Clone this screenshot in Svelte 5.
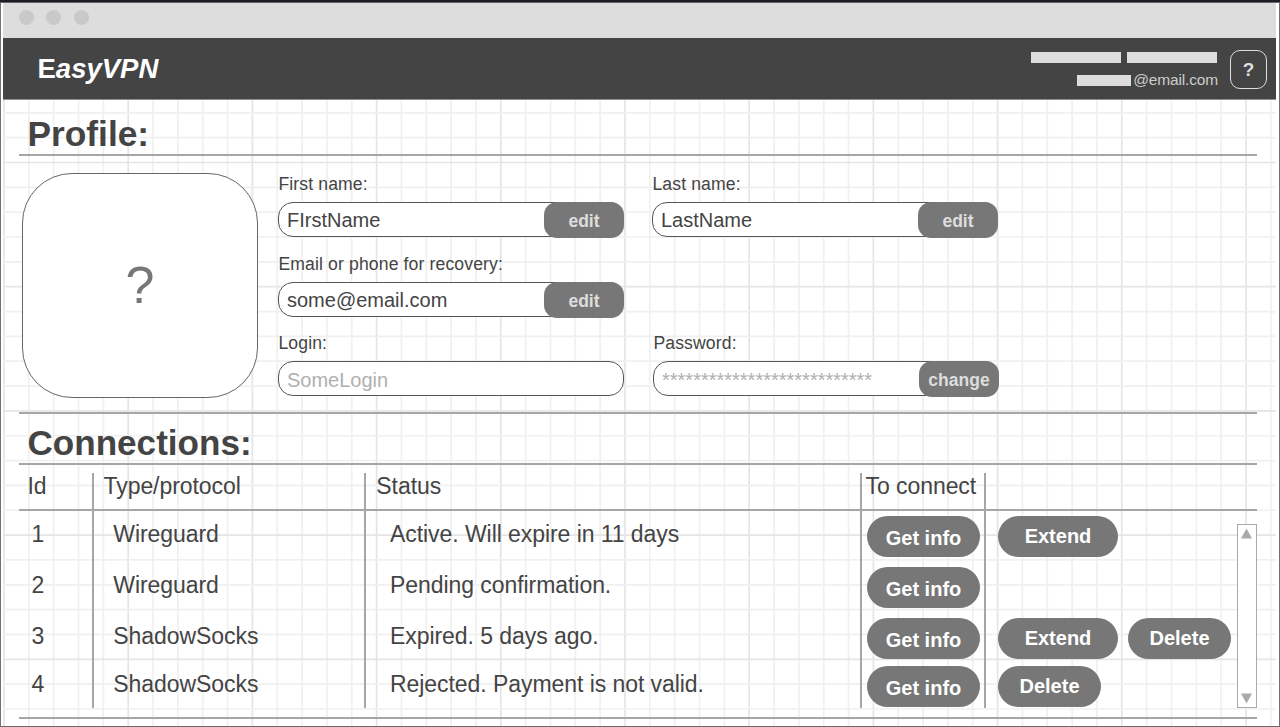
<script>
  const pitch = 24.84;
  const vlines = Array.from({ length: 52 }, (_, i) => ({ p: 4.0 + i * pitch, major: i % 5 === 0 }));
  const hlines = Array.from({ length: 29 }, (_, i) => ({ p: 38.3 + i * pitch, major: i % 5 === 0 }));

  const rows = [
    { id: 1, type: 'Wireguard', status: 'Active. Will expire in 11 days', actions: ['Extend'] },
    { id: 2, type: 'Wireguard', status: 'Pending confirmation.', actions: [] },
    { id: 3, type: 'ShadowSocks', status: 'Expired. 5 days ago.', actions: ['Extend', 'Delete'] },
    { id: 4, type: 'ShadowSocks', status: 'Rejected. Payment is not valid.', actions: ['Delete'] }
  ];
</script>

<div class="window">
  <svg class="grid" width="1280" height="727" aria-hidden="true">
    {#each vlines as l}
      <line x1={l.p} x2={l.p} y1="99" y2="726" class:major={l.major} />
    {/each}
    {#each hlines as l}
      <line y1={l.p} y2={l.p} x1="3" x2="1276" class:major={l.major} />
    {/each}
  </svg>

  <div class="titlebar"><i></i><i></i><i></i></div>

  <header>
    <div class="brand">E<em>asyVPN</em></div>
    <div class="account">
      <div class="line"><b class="name"></b><b class="name"></b></div>
      <div class="line mail"><b class="user"></b><span>@email.com</span></div>
    </div>
    <button class="help">?</button>
  </header>

  <main>
    <h1>Profile:</h1>
    <section class="profile">
      <div class="avatar">?</div>
      <div class="fields">
        <div class="field">
          <label for="fn">First name:</label>
          <div class="box" id="fn"><span>FIrstName</span><button>edit</button></div>
        </div>
        <div class="field">
          <label for="ln">Last name:</label>
          <div class="box" id="ln"><span>LastName</span><button>edit</button></div>
        </div>
        <div class="field wide">
          <label for="em">Email or phone for recovery:</label>
          <div class="box" id="em"><span>some@email.com</span><button>edit</button></div>
        </div>
        <div class="field">
          <label for="lg">Login:</label>
          <div class="box muted" id="lg"><span>SomeLogin</span></div>
        </div>
        <div class="field shift">
          <label for="pw">Password:</label>
          <div class="box muted" id="pw"><span class="stars">***************************</span><button>change</button></div>
        </div>
      </div>
    </section>

    <h1 class="second">Connections:</h1>
    <section class="table">
      <div class="row head">
        <div class="c1">Id</div>
        <div class="c2">Type/protocol</div>
        <div class="c3">Status</div>
        <div class="c4">To connect</div>
        <div class="c5"></div>
      </div>
      <div class="body">
        {#each rows as r}
          <div class="row r{r.id}">
            <div class="c1">{r.id}</div>
            <div class="c2">{r.type}</div>
            <div class="c3">{r.status}</div>
            <div class="c4"><button class="pill info">Get info</button></div>
            <div class="c5">
              {#each r.actions as a}
                <button class="pill {a.toLowerCase()}">{a}</button>
              {/each}
            </div>
          </div>
        {/each}
        <div class="scroll">
          <svg width="12" height="11" viewBox="0 0 12 11"><path d="M5.5 .5 11 10.5H0Z" /></svg>
          <svg width="12" height="11" viewBox="0 0 12 11"><path d="M0 .5H11L5.5 10.5Z" /></svg>
        </div>
      </div>
    </section>
  </main>
</div>

<style>
  :global(body) {
    margin: 0;
    background: #fff;
  }
  .window {
    position: relative;
    box-sizing: border-box;
    width: 1280px;
    height: 727px;
    overflow: hidden;
    padding: 3px 4px 0 3px;
    background: #fff;
    box-shadow: inset 0 2px #1c1e28, inset 0 3px #64656a, inset 1px 0 #717171, inset -1px 0 #717171, inset 0 -1px #666;
    font-family: "Liberation Sans", Arial, sans-serif;
    color: #444;
  }
  .grid {
    position: absolute;
    left: 0;
    top: 0;
  }
  .grid line {
    stroke: #f0f0f0;
    stroke-width: 1.7;
  }
  .grid line.major {
    stroke: #e5e5e5;
  }
  button {
    font: inherit;
    border: 0;
    padding: 0;
    margin: 0;
    color: inherit;
    background: none;
  }
  .titlebar {
    position: relative;
    display: flex;
    gap: 12.5px;
    height: 35px;
    padding: 7px 0 0 15.7px;
    box-sizing: border-box;
    background: #ddd;
  }
  .titlebar i {
    width: 15px;
    height: 15px;
    border-radius: 50%;
    background: #c9c9c9;
  }
  header {
    position: relative;
    display: flex;
    align-items: center;
    height: 61px;
    border-bottom: 1px solid #8f8f8f;
    background: #444;
    color: #fff;
  }
  .brand {
    flex: 1;
    padding: 1px 0 0 34.5px;
    font-size: 27.5px;
    font-weight: 700;
    line-height: 30px;
  }
  .account {
    display: flex;
    flex-direction: column;
    align-items: flex-end;
    margin-right: 12px;
    padding-top: 5px;
  }
  .line {
    display: flex;
    gap: 6px;
    margin-right: 1px;
  }
  .line b {
    height: 11px;
    background: #ddd;
  }
  .name {
    width: 90px;
  }
  .line.mail {
    gap: 2px;
    align-items: center;
    height: 20px;
    margin: 7px 0 0;
    font-size: 15.5px;
    color: #ccc;
    letter-spacing: -0.15px;
  }
  .user {
    width: 54px;
  }
  .help {
    box-sizing: border-box;
    width: 37px;
    height: 39px;
    margin: 1px 9px 0 0;
    padding-top: 1px;
    border: 1px solid #ddd;
    border-radius: 10px;
    font-size: 19px;
    font-weight: 700;
    color: #ddd;
  }
  main {
    position: relative;
    margin: 0 19px 0 16px;
  }
  h1 {
    box-sizing: border-box;
    height: 55px;
    margin: 0;
    padding: 14px 0 0 8.5px;
    border-bottom: 2px solid #a6a6a6;
    font-size: 35.1px;
    line-height: 40px;
  }
  h1:first-child {
    height: 56px;
    margin-top: -0.4px;
    font-size: 35.3px;
  }
  h1.second {
    height: 51px;
    padding-top: 9px;
  }
  .profile {
    display: flex;
    box-sizing: border-box;
    height: 258px;
    padding: 17.6px 0 0 3px;
    border-bottom: 2px solid #a6a6a6;
  }
  .avatar {
    display: grid;
    place-items: center;
    box-sizing: border-box;
    width: 236px;
    height: 225px;
    padding-bottom: 2px;
    border: 1px solid #666;
    border-radius: 50px;
    background: #fff;
    font-size: 52px;
    color: #777;
  }
  .fields {
    display: grid;
    grid-template-columns: 346px 346px;
    grid-template-rows: 80px 79px 79px;
    column-gap: 28px;
    margin-left: 20px;
  }
  .wide {
    grid-column: 1 / -1;
    width: 346px;
  }
  .shift {
    margin: 0 -1px 0 1px;
  }
  label {
    display: block;
    height: 28.5px;
    padding-left: 0.4px;
    font-size: 17.6px;
    line-height: 23px;
    letter-spacing: 0.13px;
  }
  .box {
    display: flex;
    box-sizing: border-box;
    height: 35px;
    border: 1px solid #555;
    border-radius: 15px;
    background: #fff;
    font-size: 20px;
    line-height: 35px;
  }
  .box span {
    flex: 1;
    padding-left: 8px;
  }
  .box.muted span {
    color: #b0b0b0;
    line-height: 37px;
  }
  .box button {
    width: 80px;
    height: 36px;
    margin: -1px -1px 0 0;
    border-radius: 13px;
    background: #777;
    color: #ddd;
    font-size: 17.5px;
    font-weight: 700;
    line-height: 38px;
  }
  .row {
    display: grid;
    grid-template-columns: 73px 272px 496px 124px 1fr;
    font-size: 23px;
    line-height: 26px;
    letter-spacing: -0.06px;
  }
  .row > div {
    box-sizing: border-box;
  }
  .row > div + div {
    border-left: 2px solid #a6a6a6;
  }
  .head {
    height: 46px;
    border-bottom: 2px solid #a6a6a6;
    padding-top: 8px;
    box-sizing: border-box;
  }
  .head .c1 {
    padding-left: 8.5px;
  }
  .head .c2 {
    padding-left: 9.5px;
  }
  .head .c3 {
    padding-left: 10.3px;
  }
  .head .c4 {
    padding-left: 3.5px;
  }
  .body {
    position: relative;
    height: 206px;
    border-bottom: 2px solid #a6a6a6;
  }
  .r1,
  .r2 {
    height: 51px;
  }
  .r3 {
    height: 48px;
  }
  .r4 {
    height: 47px;
  }
  .body .c1,
  .body .c2,
  .body .c3 {
    padding-top: 10px;
  }
  .body .c1 {
    padding-left: 12.4px;
  }
  .body .c2 {
    padding-left: 19.3px;
  }
  .body .c3 {
    padding-left: 24px;
  }
  .body .c4 {
    padding: 5px 0 0 5px;
  }
  .body .c5 {
    display: flex;
    gap: 10px;
    padding: 5px 0 0 12px;
  }
  .pill {
    height: 41px;
    border-radius: 20.5px;
    background: #777;
    color: #fff;
    font-size: 20px;
    font-weight: 700;
    line-height: 39px;
    letter-spacing: 0;
  }
  .info {
    display: block;
    width: 113px;
    padding-top: 3px;
  }
  .scroll {
    position: absolute;
    right: 0;
    top: 13px;
    display: flex;
    flex-direction: column;
    justify-content: space-between;
    align-items: center;
    box-sizing: border-box;
    width: 20px;
    height: 184px;
    padding: 3px 0;
    border: 1px solid #aaa;
    background: #fff;
  }
  .scroll path {
    fill: #aaa;
  }
  .extend {
    width: 120px;
  }
  .delete {
    width: 103px;
  }
</style>
